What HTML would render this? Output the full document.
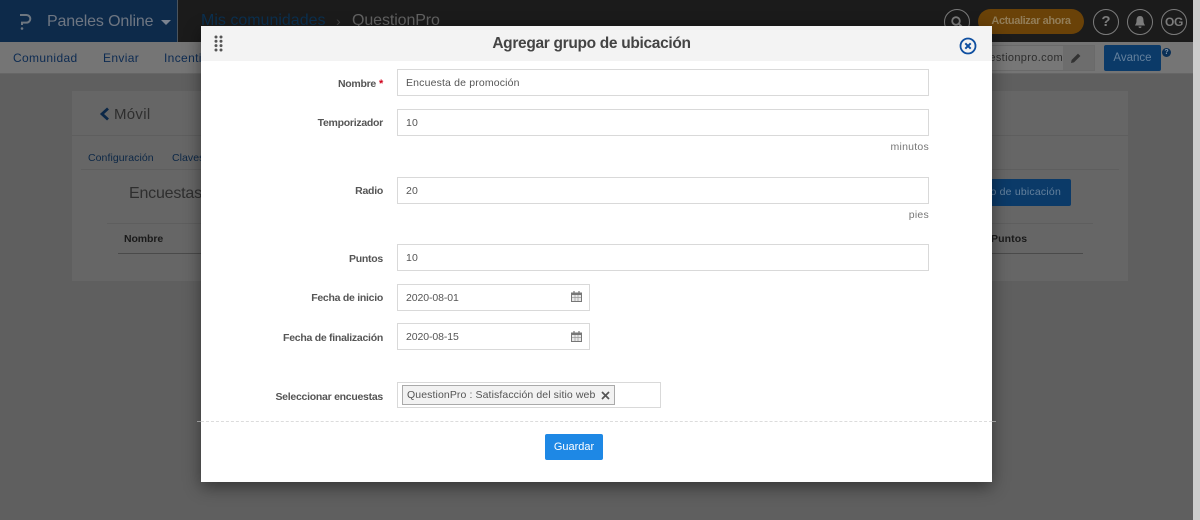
<!DOCTYPE html>
<html lang="es"><head><meta charset="utf-8"><title>Agregar grupo de ubicación</title>
<style>
html,body{margin:0;padding:0;width:1200px;height:520px;overflow:hidden;background:#5f5f5f;font-family:"Liberation Sans",sans-serif}
div,span{position:absolute;box-sizing:border-box;white-space:nowrap}
.t{line-height:16px;height:16px}
.nav{font-size:12px;color:#0d2b52;letter-spacing:.35px}
.lab{right:817px;font-size:10.5px;font-weight:bold;color:#555;letter-spacing:-.27px}
.inp{left:397px;background:#fff;border:1px solid #d9d9d9;height:27px;width:532px;font-size:10.5px;color:#555;line-height:27px;padding-left:8px;letter-spacing:.16px}
.hint{right:271px;font-size:10.5px;color:#777;letter-spacing:.25px}
.circ{top:9px;width:26px;height:26px;border:1px solid #7c7c7c;border-radius:50%;color:#7c7c7c;font-weight:bold;text-align:center;line-height:24px;font-size:12px}
</style></head><body>
<div style="left:0;top:0;width:1193px;height:42px;background:#1b1b1b"></div>
<div style="left:0;top:0;width:178px;height:42px;background:#0d2a4a;border-right:1px solid #4a545e"></div>
<svg style="position:absolute;left:19px;top:13px" width="13" height="18" viewBox="0 0 13 18"><path d="M1 2h6.500a3.800 3.800 0 0 1 0 7.600H3v2.400" fill="none" stroke="#6d7680" stroke-width="2"/><circle cx="3" cy="15.500" r="1.300" fill="#6d7680"/></svg>
<div class="t" style="left:47px;top:14px;font-size:16px;color:#6e7682;letter-spacing:-.15px">Paneles Online</div>
<div style="left:161px;top:20px;border:5px solid transparent;border-top:5px solid #7b8390;border-bottom:0"></div>
<div class="t" style="left:201px;top:13px;font-size:16px;color:#0b3050;letter-spacing:0">Mis comunidades</div>
<div class="t" style="left:336px;top:13px;font-size:14px;color:#444">›</div>
<div class="t" style="left:352px;top:13px;font-size:16px;color:#626262;letter-spacing:-.1px">QuestionPro</div>
<div class="circ" style="left:944px"><svg width="14" height="14" viewBox="0 0 14 14" style="position:absolute;left:5px;top:5px"><circle cx="6" cy="6" r="3.800" fill="none" stroke="#7c7c7c" stroke-width="1.800"/><path d="M9 9l3.500 3.500" stroke="#7c7c7c" stroke-width="2"/></svg></div>
<div style="left:978px;top:9px;width:106px;height:25px;background:#6a4208;border-radius:13px;color:#927d58;font-size:11px;font-weight:bold;line-height:25px;text-align:center;letter-spacing:-.4px">Actualizar ahora</div>
<div class="circ" style="left:1093px;font-size:15px">?</div>
<div class="circ" style="left:1127px"><svg width="14" height="14" viewBox="0 0 14 14" style="position:absolute;left:5px;top:5px"><path d="M7 1c-3 0-3.500 2.500-3.500 5S2 10 2 10.500h10C12 10 10.500 8.500 10.500 6S10 1 7 1zM5.500 11.500a1.500 1.500 0 0 0 3 0z" fill="#7c7c7c"/></svg></div>
<div class="circ" style="left:1161px;font-size:12px;letter-spacing:-.3px">OG</div>

<div style="left:0;top:42px;width:1193px;height:32px;background:#757575;border-bottom:1px solid #666"></div>
<div class="t nav" style="left:13px;top:50px">Comunidad</div>
<div class="t nav" style="left:103px;top:50px">Enviar</div>
<div class="t nav" style="left:164px;top:50px">Incentivos</div>
<div style="left:985px;top:45px;width:110px;height:26px;background:#777;border:1px solid #6a6a6a"></div>
<div style="left:1063px;top:46px;width:31px;height:24px;background:#6d6d6d"></div>
<div class="t" style="left:992px;top:50px;font-size:11px;color:#2d2d2d;letter-spacing:.35px;width:71px;overflow:hidden;direction:rtl">questionpro.com</div>
<svg style="position:absolute;left:1070px;top:52px" width="12" height="12" viewBox="0 0 12 12"><path d="M1 11l.6-3L8 1.600 10.400 4 4 10.400z" fill="#333"/></svg>
<div style="left:1104px;top:45px;width:57px;height:26px;background:#0b3a68;border-radius:2px;color:#64809c;font-size:11.500px;line-height:26px;text-align:center">Avance</div>
<div style="left:1162px;top:48px;width:9px;height:9px;border-radius:50%;background:#0a2f56;color:#8a9cb0;font-size:7px;font-weight:bold;line-height:9px;text-align:center">?</div>

<div style="left:72px;top:91px;width:1056px;height:190px;background:#666"></div>
<div style="left:72px;top:135px;width:1056px;height:1px;background:#5e5e5e"></div>
<svg style="position:absolute;left:99px;top:107px" width="11" height="14" viewBox="0 0 11 14"><path d="M9 1.500L3 7l6 5.500" fill="none" stroke="#0b2747" stroke-width="2.800"/></svg>
<div class="t" style="left:114px;top:107px;font-size:15px;color:#2e2e2e;letter-spacing:.3px">Móvil</div>
<div class="t" style="left:88px;top:150px;font-size:10.500px;color:#0c2746;letter-spacing:.07px">Configuración</div>
<div class="t" style="left:172px;top:150px;font-size:10.500px;color:#0c2746;letter-spacing:.05px">Claves</div>
<div style="left:81px;top:169px;width:1038px;height:1px;background:#5e5e5e"></div>
<div class="t" style="left:129px;top:186px;font-size:16px;color:#2e2e2e;letter-spacing:-.2px">Encuestas</div>
<div style="left:960px;top:179px;width:111px;height:27px;background:#0b3a68;border-radius:2px"></div>
<div class="t" style="right:139px;top:184px;font-size:10.500px;color:#64809c;letter-spacing:.2px">Agregar grupo de ubicación</div>
<div style="left:107px;top:223px;width:986px;height:1px;background:#5e5e5e"></div>
<div class="t" style="left:124px;top:231px;font-size:10.500px;font-weight:bold;color:#1a1a1a;letter-spacing:-.1px">Nombre</div>
<div class="t" style="left:991px;top:231px;font-size:10.500px;font-weight:bold;color:#1a1a1a;letter-spacing:.1px">Puntos</div>
<div style="left:118px;top:253px;width:965px;height:1px;background:#4a4a4a"></div>

<div style="left:1193px;top:0;width:7px;height:520px;background:#cdcdcd"></div>

<div style="left:201px;top:26px;width:791px;height:456px;background:#fff;box-shadow:0 5px 16px rgba(0,0,0,.45)"></div>
<div style="left:201px;top:26px;width:791px;height:35px;background:#f3f3f3"></div>
<svg style="position:absolute;left:214px;top:35px" width="9" height="17" viewBox="0 0 9 17" fill="#555"><circle cx="2" cy="2" r="1.500"/><circle cx="7" cy="2" r="1.500"/><circle cx="2" cy="6.300" r="1.500"/><circle cx="7" cy="6.300" r="1.500"/><circle cx="2" cy="10.600" r="1.500"/><circle cx="7" cy="10.600" r="1.500"/><circle cx="2" cy="15" r="1.500"/><circle cx="7" cy="15" r="1.500"/></svg>
<div class="t" style="left:201px;width:781px;top:36px;text-align:center;font-size:15.500px;font-weight:bold;color:#444;letter-spacing:-.32px">Agregar grupo de ubicación</div>
<svg style="position:absolute;left:959px;top:37px" width="18" height="18" viewBox="0 0 18 18"><circle cx="9" cy="9" r="7.500" fill="none" stroke="#0f4fa0" stroke-width="1.800"/><path d="M6.300 6.300l5.400 5.400M11.700 6.300l-5.400 5.400" stroke="#0f4fa0" stroke-width="2"/></svg>

<div class="t lab" style="top:76px;right:824px">Nombre</div>
<div class="t" style="left:379px;top:76px;font-size:11px;font-weight:bold;color:#d0021b">*</div>
<div class="inp" style="top:69px">Encuesta de promoción</div>
<div class="t lab" style="top:115px">Temporizador</div>
<div class="inp" style="top:109px">10</div>
<div class="t hint" style="top:139px">minutos</div>
<div class="t lab" style="top:183px">Radio</div>
<div class="inp" style="top:177px">20</div>
<div class="t hint" style="top:207px">pies</div>
<div class="t lab" style="top:251px">Puntos</div>
<div class="inp" style="top:244px">10</div>
<div class="t lab" style="top:290px">Fecha de inicio</div>
<div class="inp" style="top:284px;width:193px;letter-spacing:-.1px">2020-08-01</div>
<div class="t lab" style="top:330px">Fecha de finalización</div>
<div class="inp" style="top:323px;width:193px;letter-spacing:-.1px">2020-08-15</div>
<svg style="position:absolute;left:571px;top:291px" width="11" height="11" viewBox="0 0 11 11"><path d="M.500 2h10v8.500H.500z" fill="#e8e8e8" stroke="#777"/><path d="M.500 2h10v2H.500z" fill="#777"/><path d="M3 0v3M8 0v3" stroke="#777" stroke-width="1.200"/><path d="M4 4v6M7 4v6M1 6.500h9" stroke="#999" stroke-width=".7"/></svg>
<svg style="position:absolute;left:571px;top:331px" width="11" height="11" viewBox="0 0 11 11"><path d="M.500 2h10v8.500H.500z" fill="#e8e8e8" stroke="#777"/><path d="M.500 2h10v2H.500z" fill="#777"/><path d="M3 0v3M8 0v3" stroke="#777" stroke-width="1.200"/><path d="M4 4v6M7 4v6M1 6.500h9" stroke="#999" stroke-width=".7"/></svg>
<div class="t lab" style="top:389px">Seleccionar encuestas</div>
<div style="left:397px;top:382px;width:264px;height:26px;background:#fff;border:1px solid #d9d9d9"></div>
<div style="left:402px;top:385px;width:213px;height:20px;background:#f2f2f2;border:1px solid #aaa;font-size:10.500px;color:#555;line-height:18px;padding-left:4px;letter-spacing:.1px">QuestionPro : Satisfacción del sitio web</div>
<svg style="position:absolute;left:601px;top:391px" width="9" height="9" viewBox="0 0 9 9"><path d="M1 1l7 7M8 1L1 8" stroke="#555" stroke-width="1.700"/></svg>
<div style="left:201px;top:421px;width:791px;height:0;border-top:1px dashed #dcdcdc"></div>
<div style="left:197px;top:421px;width:4px;height:1px;background:#999"></div>
<div style="left:992px;top:421px;width:4px;height:1px;background:#999"></div>
<div style="left:545px;top:434px;width:58px;height:26px;background:#1e88e5;border-radius:2px;color:#fff;font-size:11px;line-height:26px;text-align:center">Guardar</div>
</body></html>
